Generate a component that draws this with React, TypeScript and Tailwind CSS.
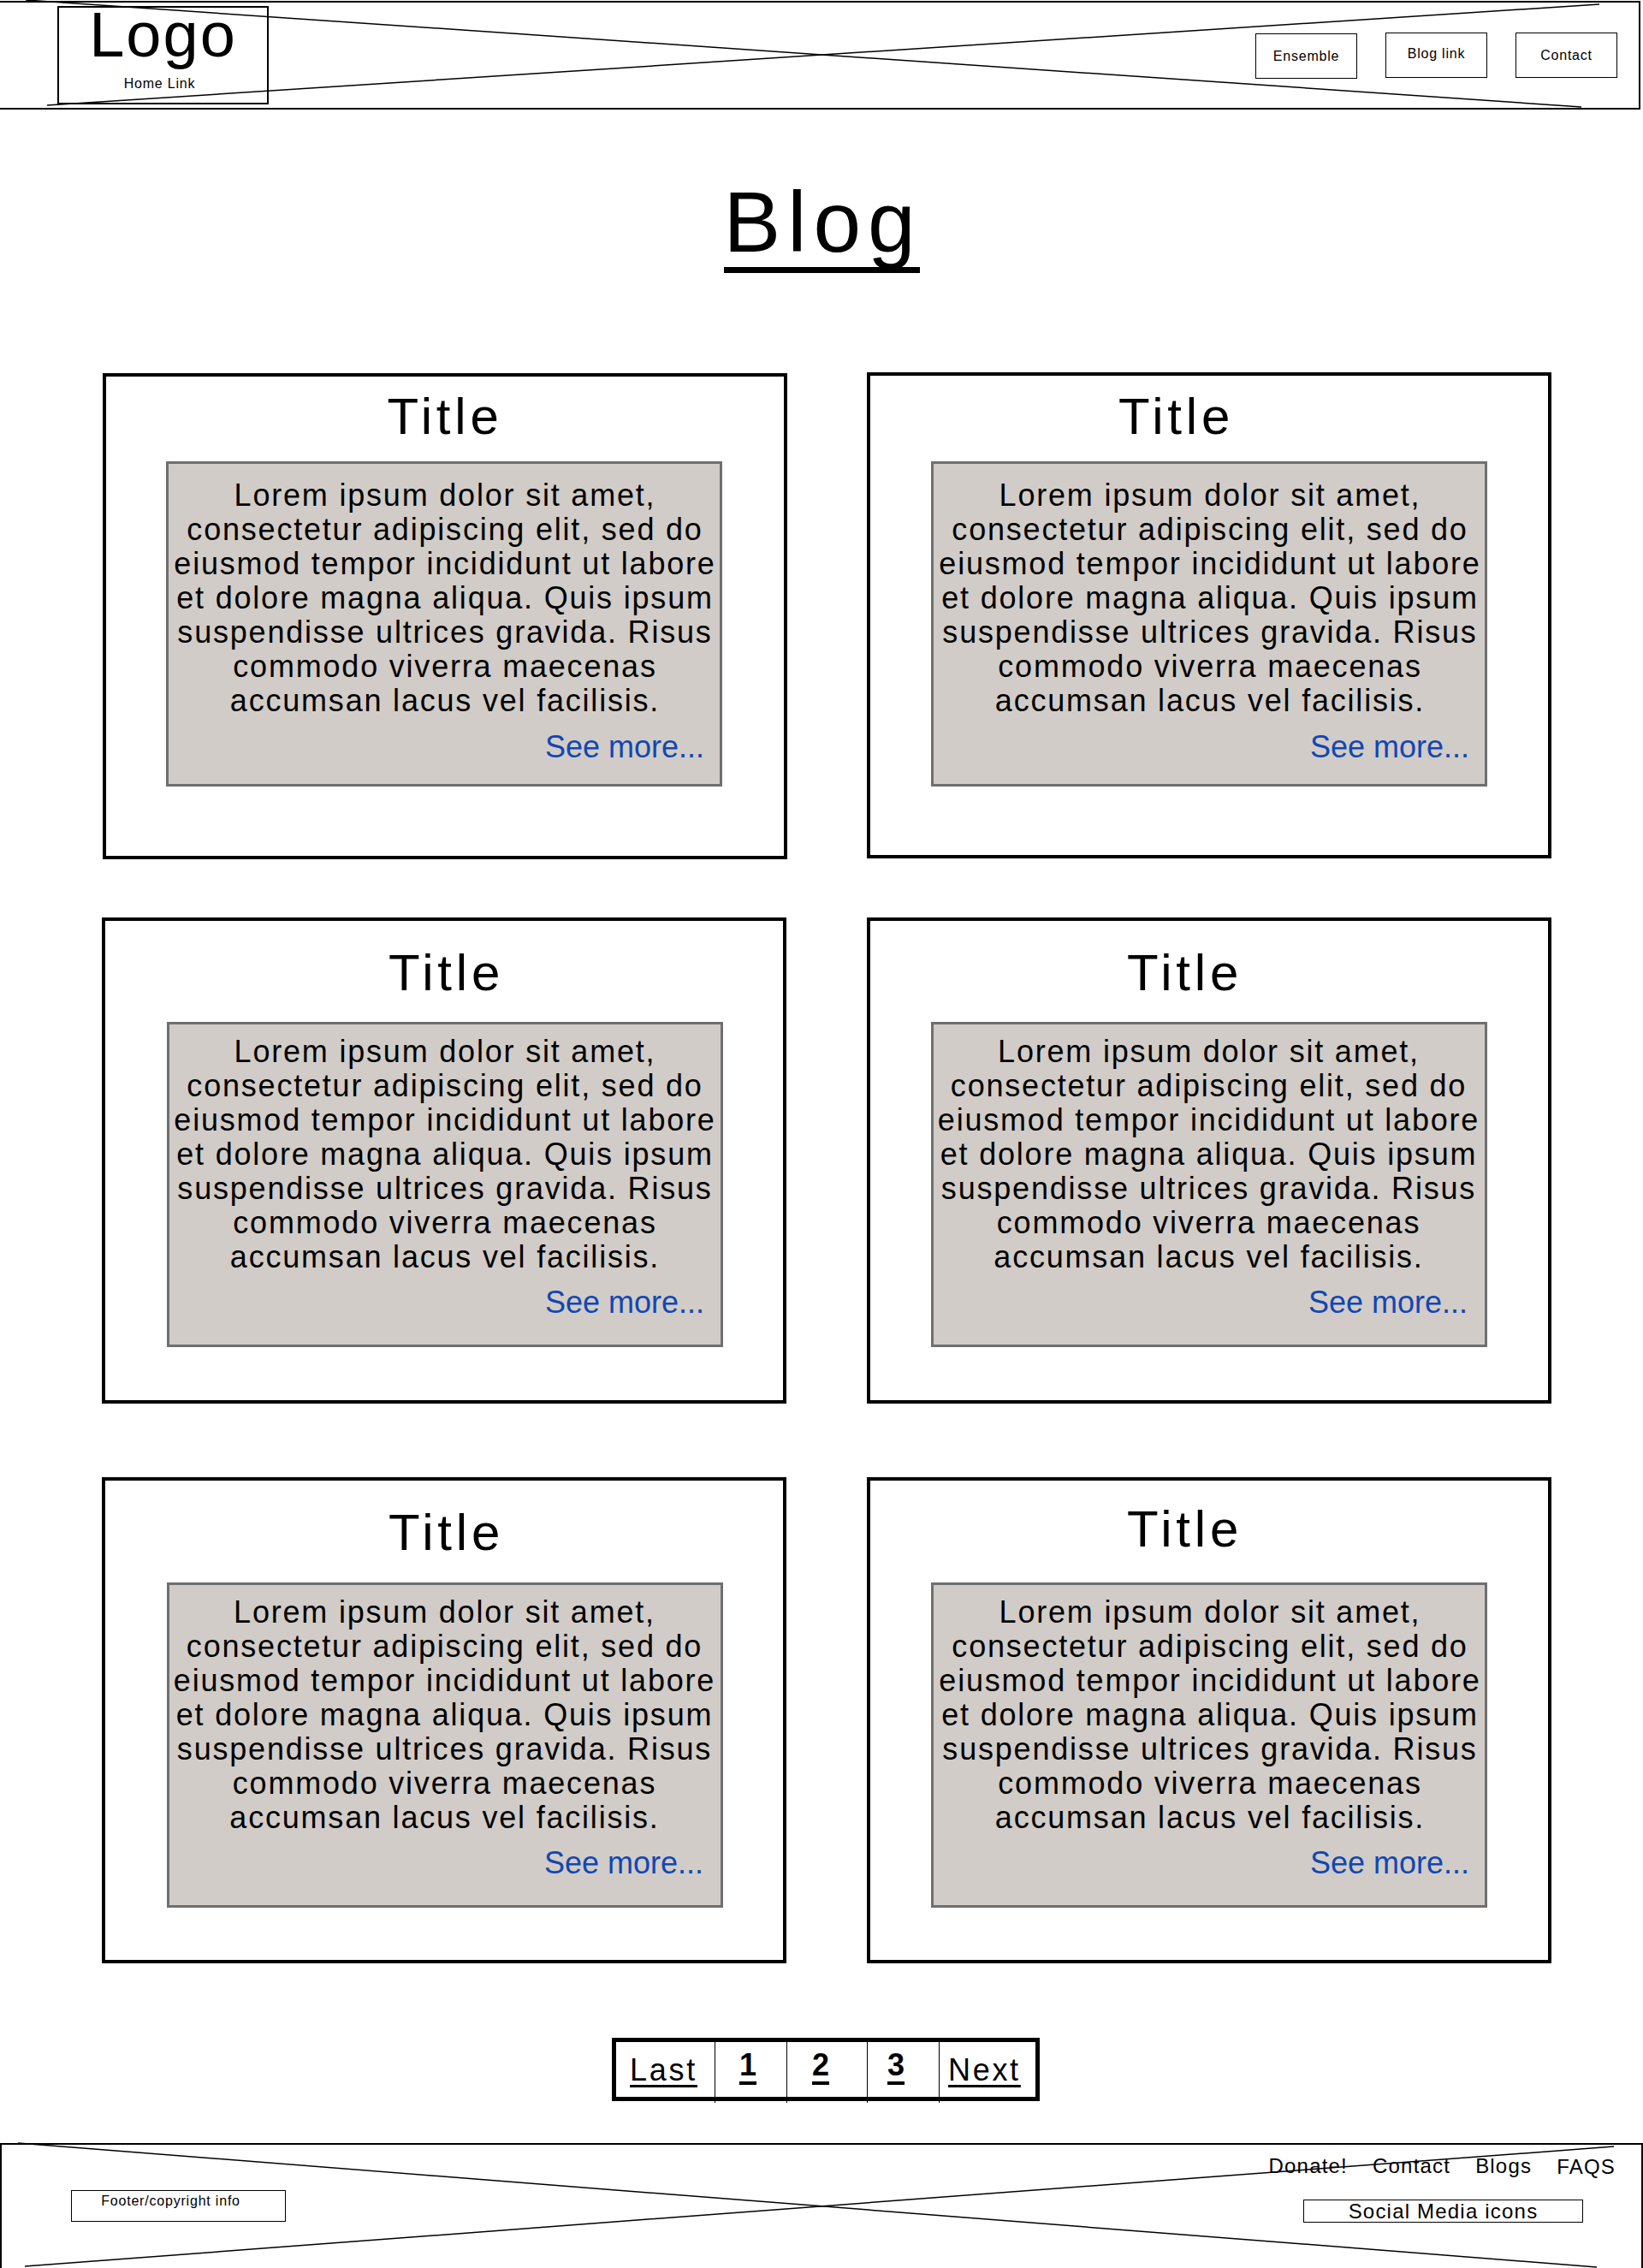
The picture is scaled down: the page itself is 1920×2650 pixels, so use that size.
const lines = [
  "Lorem ipsum dolor sit amet,",
  "consectetur adipiscing elit, sed do",
  "eiusmod tempor incididunt ut labore",
  "et dolore magna aliqua. Quis ipsum",
  "suspendisse ultrices gravida. Risus",
  "commodo viverra maecenas",
  "accumsan lacus vel facilisis.",
];

// the wireframe's boxes were placed by hand, so each card is a few pixels off its neighbours
const cards = [
  { card: "ml-px mt-px", title: "mt-[14px]", box: "mt-[19px] mr-[2px] pt-[17px]", text: "pl-[2px]", link: "mt-[14px] pr-[18px]" },
  { card: "", title: "mt-[15px] mr-[77px]", box: "mt-[19px] pt-[17px]", text: "pl-[2px]", link: "mt-[14px] pr-[18px]" },
  { card: "mt-[68px]", title: "mt-[28px] ml-[5px]", box: "mt-[24px] ml-[2px] pt-[12px]", text: "", link: "mt-[13px] pr-[19px]" },
  { card: "mt-[68px]", title: "mt-[28px] mr-[57px]", box: "mt-[24px] pt-[12px]", text: "pr-[1px]", link: "mt-[13px] pr-5" },
  { card: "mt-[86px]", title: "mt-[28px] ml-[5px]", box: "mt-[25px] ml-[2px] pt-[12px]", text: "pr-[1px]", link: "mt-[13px] pr-5" },
  { card: "mt-[86px]", title: "mt-[24px] mr-[57px]", box: "mt-[29px] pt-[12px]", text: "pl-[2px]", link: "mt-[13px] pr-[18px]" },
];

function BlogCard({ card, title, box, text, link }: { card: string; title: string; box: string; text: string; link: string }) {
  return (
    <article className={"flex h-[568px] w-[800px] flex-col items-center border-4 border-black bg-white " + card}>
      <h2 className={"text-[60px] leading-[66px] font-normal tracking-[4.8px] text-black " + title}>Title</h2>
      <div className={"flex h-[380px] w-[650px] flex-col border-[3px] border-[#6f6f6f] bg-[#d1ccc7] " + box}>
        <p className={"text-center text-[36px] leading-[40px] tracking-[1.8px] text-black " + text}>
          {lines.map((l) => (
            <span key={l} className="block whitespace-nowrap">
              {l}
            </span>
          ))}
        </p>
        <a className={"self-end text-[36px] leading-[40px] text-[#1147b3] " + link}>See more...</a>
      </div>
    </article>
  );
}

function Cross({ a, b }: { a: number[]; b: number[] }) {
  return (
    <svg className="pointer-events-none absolute inset-0 h-full w-full overflow-visible" aria-hidden>
      {[a, b].map((p) => (
        <line key={p[0]} x1={p[0]} y1={p[1]} x2={p[2]} y2={p[3]} stroke="#000" strokeWidth="1.5" />
      ))}
    </svg>
  );
}

function NavBox({ label, className }: { label: string; className: string }) {
  return (
    <a className={"flex h-[53px] w-[119px] items-center justify-center border border-black text-[16px] tracking-[0.8px] " + className}>
      {label}
    </a>
  );
}

function PageCell({ label, className, bold }: { label: string; className: string; bold?: boolean }) {
  return (
    <div
      className={
        "relative flex h-full items-start border-r border-black text-[36px] leading-[40px] last:border-r-0 after:absolute after:top-full after:right-[-1px] after:h-[7px] after:w-px after:bg-black last:after:hidden " +
        className
      }
    >
      <a
        className={
          bold
            ? "font-bold underline decoration-[4px] underline-offset-[7px]"
            : "tracking-[2.7px] underline decoration-[3px] underline-offset-[5px]"
        }
      >
        {label}
      </a>
    </div>
  );
}

export default function App() {
  return (
    <div className="relative h-[2650px] w-[1920px] overflow-hidden bg-white font-['Liberation_Sans',Arial,sans-serif] text-black">
      <header className="relative mt-px flex h-[127px] w-[1917px] items-start justify-between border-y-2 border-r-2 border-black pl-[67px] pr-[25px]">
        <a className="mt-[4px] flex h-[115px] w-[247px] flex-col items-center border-2 border-black">
          <span className="text-[74px] leading-[64px] tracking-[2px]">Logo</span>
          <span className="mt-[15px] mr-2 text-[16px] leading-[20px] tracking-[0.8px]">Home Link</span>
        </a>
        <nav className="mt-[35px] flex gap-[33px]">
          <NavBox label="Ensemble" className="mt-px" />
          <NavBox label="Blog link" className="pb-1" />
          <NavBox label="Contact" />
        </nav>
        <Cross a={[30, -3, 1848, 122]} b={[55, 120, 1869, 2]} />
      </header>

      <h1 className="mx-auto mt-[75px] h-[116px] w-[229px] border-b-[7px] border-black text-[100px] leading-[112px] tracking-[8px] whitespace-nowrap">
        Blog
      </h1>

      <section className="mt-[116px] ml-[119px] grid grid-cols-[800px_800px] items-start gap-x-[94px]">
        {cards.map((c, i) => (
          <BlogCard key={i} {...c} />
        ))}
      </section>

      <nav className="mt-[87px] ml-[715px] flex h-[74px] w-[500px] border-[5px] border-black">
        <PageCell label="Last" className="w-[116px] pt-[13px] pl-[16px]" />
        <PageCell label="1" className="w-[84px] pt-[7px] pl-[28px]" bold />
        <PageCell label="2" className="w-[94px] pt-[7px] pl-[29px]" bold />
        <PageCell label="3" className="w-[84px] pt-[7px] pl-[23px]" bold />
        <PageCell label="Next" className="w-[112px] pt-[13px] pl-[10px]" />
      </nav>

      <footer className="absolute inset-x-0 bottom-0 h-[146px] border-x-2 border-t-2 border-black">
        <div className="absolute top-[53px] left-[81px] h-[37px] w-[251px] border border-black pr-[18px] text-center text-[16px] leading-[24px] tracking-[0.8px]">
          Footer/copyright info
        </div>
        <ul className="absolute top-[9px] right-[30px] flex gap-[29px] text-[24px] leading-[32px] tracking-[1.2px]">
          <li>Donate!</li>
          <li>Contact</li>
          <li>Blogs</li>
          <li className="mt-px">FAQS</li>
        </ul>
        <div className="absolute top-[64px] left-[1521px] h-[27px] w-[327px] border border-black text-center text-[24px] leading-[26px] tracking-[1.2px]">
          Social Media icons
        </div>
        <Cross a={[19, -2, 1864, 143]} b={[1884, 2, 27, 142]} />
      </footer>
    </div>
  );
}
